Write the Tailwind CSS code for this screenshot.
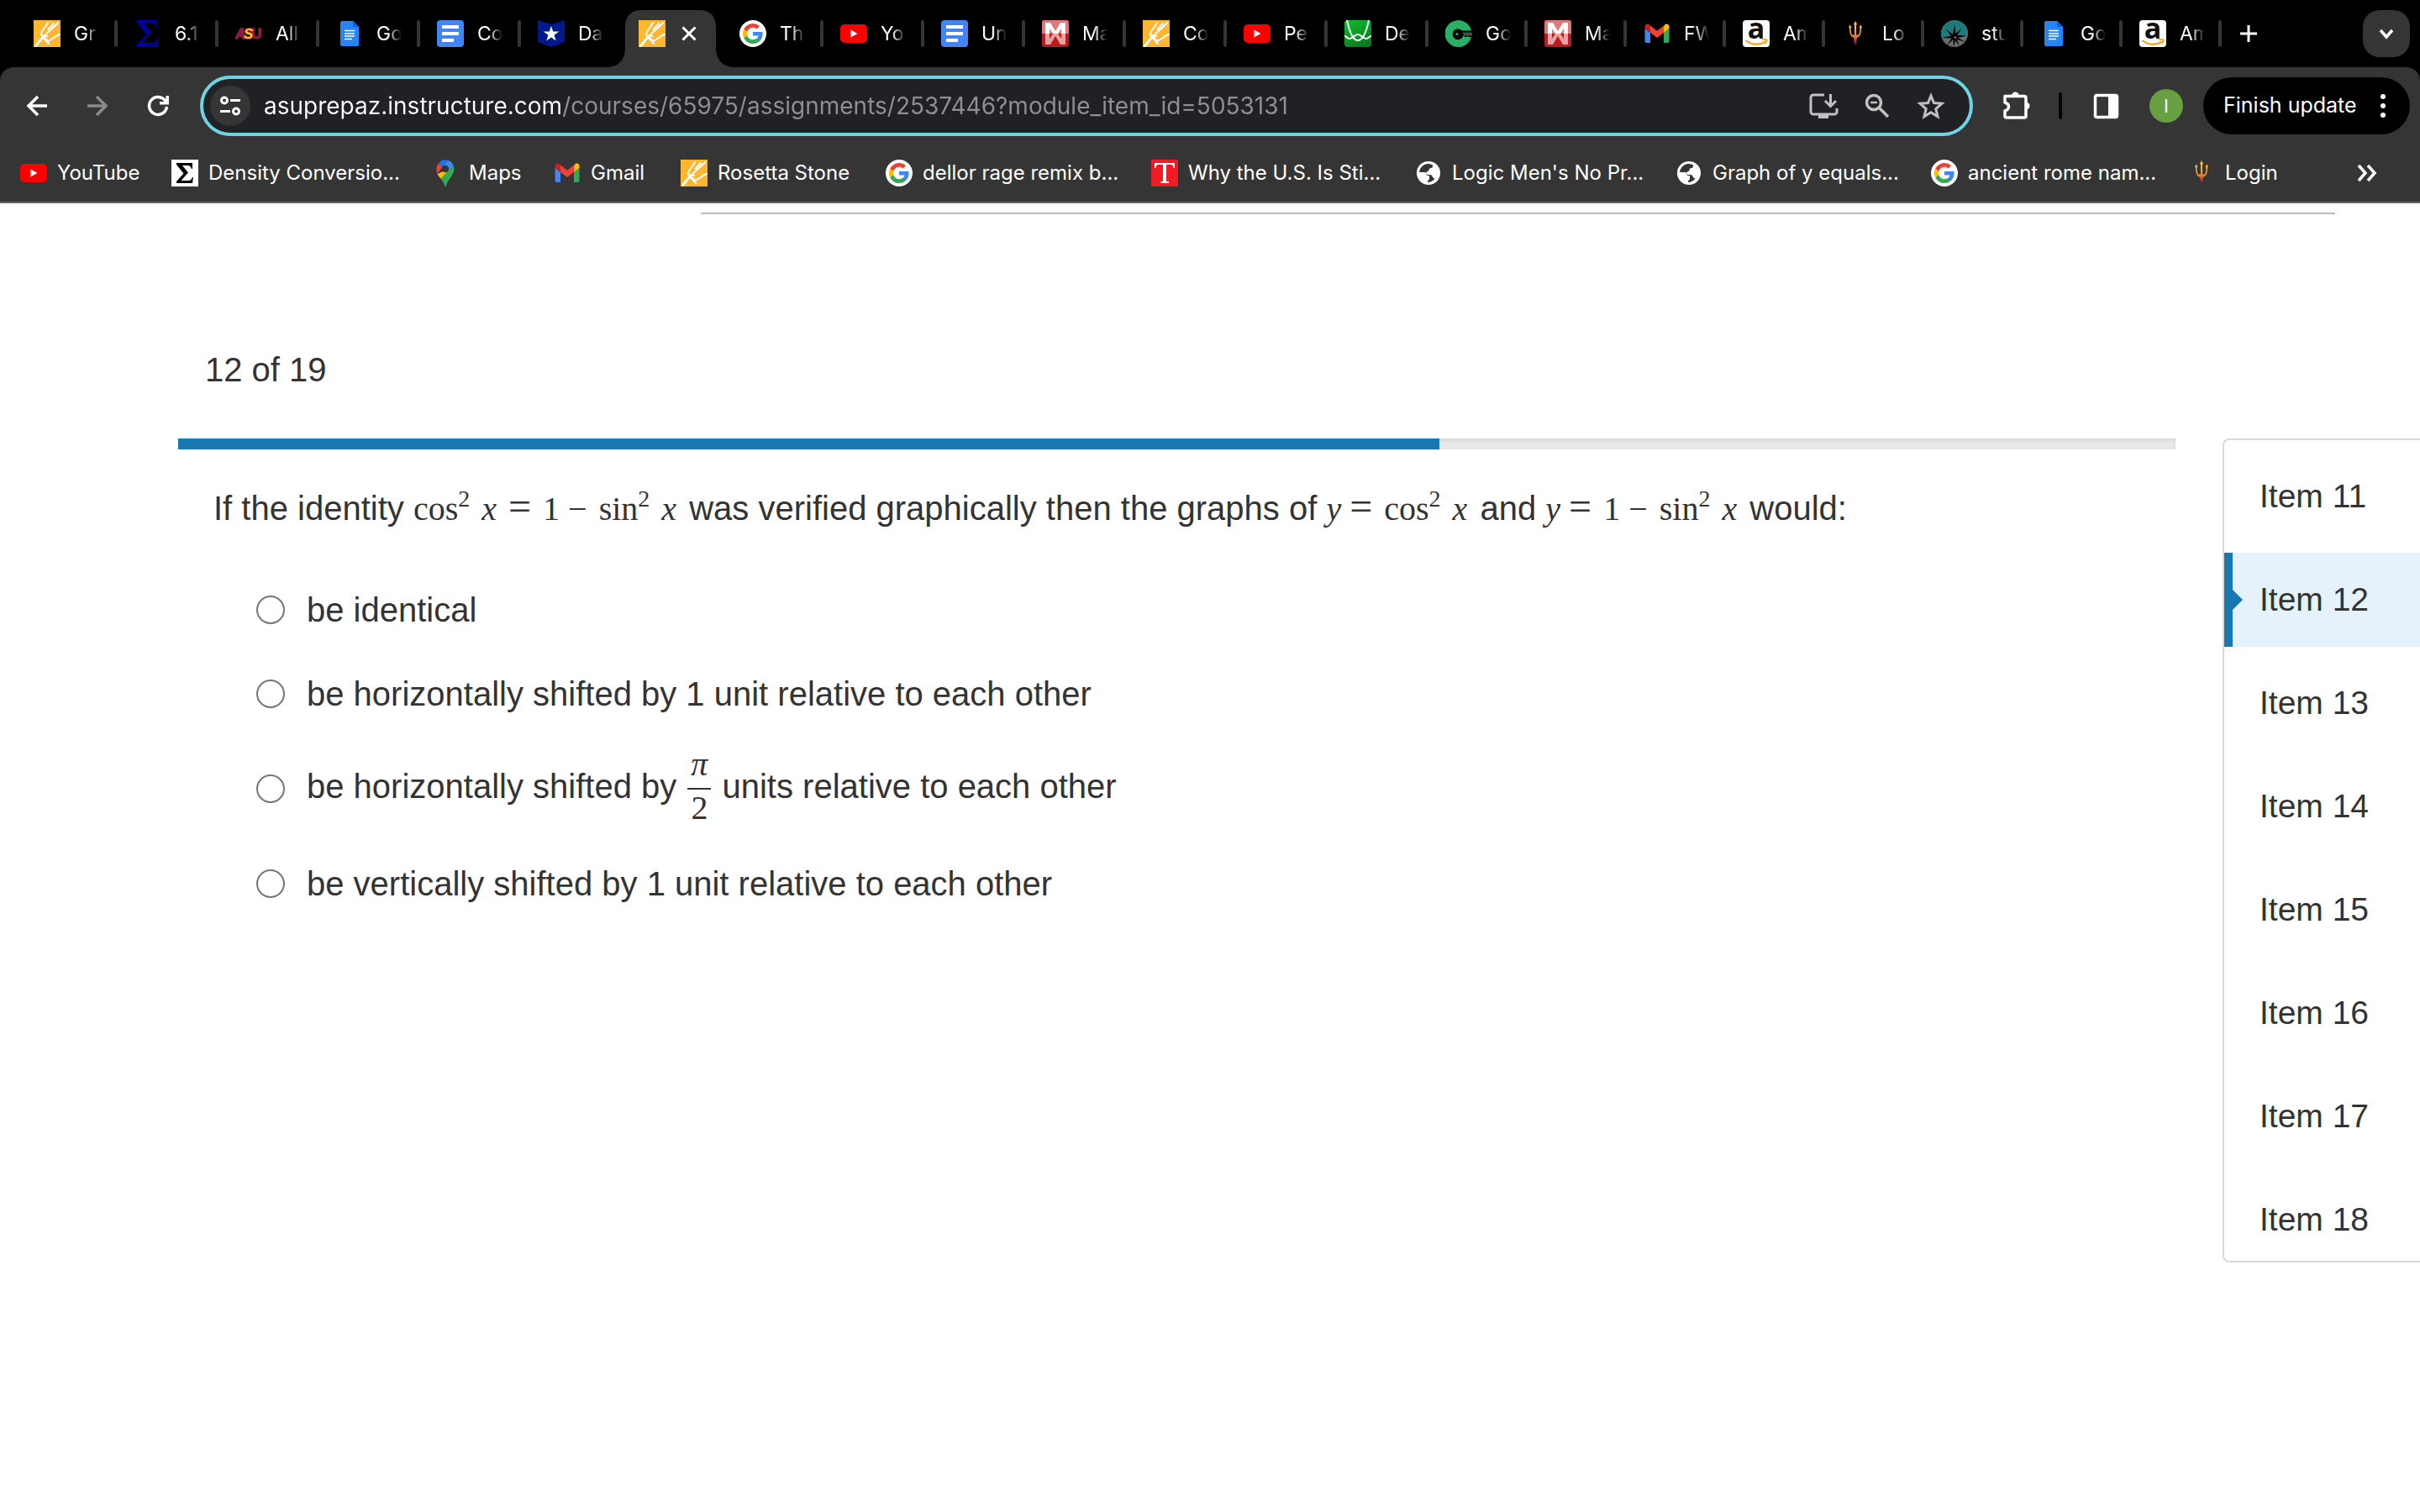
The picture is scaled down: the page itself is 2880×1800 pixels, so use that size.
<!DOCTYPE html>
<html lang="en">
<head>
  <meta charset="UTF-8">
  <meta name="viewport" content="width=device-width, initial-scale=1.0">
  <title>Assignment - Item 12</title>
  <script src="https://cdn.jsdelivr.net/npm/@tailwindcss/browser@4"></script>
</head>
<body class="bg-white text-[#333] font-['Liberation_Sans',Arial,sans-serif] min-h-screen overflow-x-hidden">

  <!-- Gradients must stay rendered, a hidden svg would drop them -->
  <svg class="absolute size-0" aria-hidden="true">
    <defs>
      <linearGradient id="gr-green" x1="0" y1="0" x2="0.6" y2="1"><stop offset="0" stop-color="#0cc22e"/><stop offset="1" stop-color="#077a20"/></linearGradient>
      <linearGradient id="gr-fork" x1="0" y1="0" x2="0" y2="1"><stop offset="0.3" stop-color="#ffb52e"/><stop offset="0.6" stop-color="#e8802c"/><stop offset="0.9" stop-color="#7a1038"/></linearGradient>
    </defs>
  </svg>

  <!-- Icon library -->
  <svg class="hidden" aria-hidden="true">
    <symbol id="i-prep" viewBox="0 0 32 32">
      <rect width="32" height="32" fill="#ffb732"/>
      <g fill="none" stroke="#fff" stroke-width="2" stroke-linecap="round">
        <path d="M2.500 30.500 11 20" stroke-width="2.800"/>
        <path d="M17 3C14 9 8 14 9 17.500c1.500 1.500 5 1 7 1.500"/>
        <path d="M29 3C24 9 17 13 12 20"/>
        <path d="M24 4 17.500 11"/>
        <path d="M31 17c-4 1-9 6-13 7.500-3 0-3-3-6-4"/>
        <path d="M11 20l7 8"/>
      </g>
    </symbol>
    <symbol id="i-sigma" viewBox="0 0 32 32">
      <path fill="#00009c" d="M2 0h24l1 9h-1c-1-4-3-5.500-7-5.500H11l9 11L9 27h11c4 0 6-2 7.500-6H29l-2 11H2v-1.500L14 17 2 1.500z"/>
    </symbol>
    <symbol id="i-sigma-box" viewBox="0 0 32 32">
      <rect width="32" height="32" fill="#fff"/>
      <path fill="#000" d="M6 4h19v7h-1c-1-3-2-4-5-4h-6l7 8.500L11.500 25H20c3 0 4-1.500 5-4h1l-1 7H6v-2l8.500-9.500L6 6z"/>
    </symbol>
    <symbol id="i-asu" viewBox="0 0 32 32">
      <g font-family="Liberation Sans" font-weight="700" font-size="17" fill="#8c1d40" stroke="#8c1d40" stroke-width="1.500">
        <text x="0" y="22" font-style="italic">A</text><text x="19" y="22">U</text>
        <text x="10" y="22" font-style="italic" fill="#ffc627" stroke-width="2" paint-order="stroke">S</text>
      </g>
    </symbol>
    <symbol id="i-gdoc" viewBox="0 0 32 32">
      <path fill="#2684fc" d="M7 1h13l7 7v21a2 2 0 0 1-2 2H7a2 2 0 0 1-2-2V3a2 2 0 0 1 2-2z"/>
      <path fill="#0066da" d="M20 1l7 7h-5a2 2 0 0 1-2-2z"/>
      <path stroke="#fff" stroke-width="1.500" d="M10 12.500h12M10 16h12M10 19h12M10 22.500h9"/>
    </symbol>
    <symbol id="i-doc" viewBox="0 0 32 32">
      <rect width="32" height="32" rx="4" fill="#4285f4"/>
      <path stroke="#fff" stroke-width="4" d="M6 8h20M6 16h20M6 24h14"/>
    </symbol>
    <symbol id="i-shield" viewBox="0 0 32 32">
      <path fill="#001a8c" d="M0 0l16 5L32 0v26l-16 6L0 26z"/>
      <path fill="#fff" d="m16 7 2.200 6.600h7L19.600 17.700 21.700 24.500 16 20.400 10.300 24.500l2.100-6.800L6.800 13.600h7z"/>
    </symbol>
    <symbol id="i-google" viewBox="0 0 32 32">
      <circle cx="16" cy="16" r="16" fill="#fff"/>
      <g transform="translate(4 4)">
        <path fill="#4285f4" d="M23.500 12.300c0-.8-.1-1.600-.2-2.300H12v4.500h6.500a5.500 5.500 0 0 1-2.400 3.600v3h3.900c2.200-2.100 3.500-5.200 3.500-8.800z"/>
        <path fill="#34a853" d="M12 24c3.200 0 6-1.100 8-2.900l-3.900-3c-1.100.7-2.500 1.200-4.100 1.200-3.100 0-5.800-2.100-6.700-5H1.300v3.100A12 12 0 0 0 12 24z"/>
        <path fill="#fbbc05" d="M5.300 14.300a7.200 7.200 0 0 1 0-4.600V6.600h-4a12 12 0 0 0 0 10.800z"/>
        <path fill="#ea4335" d="M12 4.800c1.800 0 3.300.6 4.600 1.800L20 3.200A12 12 0 0 0 1.300 6.600l4 3.100c.9-2.800 3.600-4.900 6.700-4.900z"/>
      </g>
    </symbol>
    <symbol id="i-yt" viewBox="0 0 32 32">
      <rect y="5" width="32" height="22" rx="5" fill="#f00"/>
      <path fill="#fff" d="M12.500 11.500v9l8-4.500z"/>
    </symbol>
    <symbol id="i-mirror" viewBox="0 0 32 32">
      <rect width="32" height="32" rx="3" fill="#b81c20"/>
      <path fill="#e0797b" d="M3 0h26a3 3 0 0 1 3 3v13H0V3a3 3 0 0 1 3-3z"/>
      <path fill="#fff" d="M4 16V3h6l6 10 6-10h6v13h-5V10l-4 6h-6l-4-6v6z"/>
      <path fill="#ec9fa0" d="M4 16v13h6l6-10 6 10h6V16h-5v6l-4-6h-6l-4 6v-6z"/>
    </symbol>
    <symbol id="i-desmos" viewBox="0 0 32 32">
      <rect width="32" height="32" rx="4" fill="url(#gr-green)"/>
      <path fill="none" stroke="#fff" stroke-width="2" d="M3 0c3 14 7 24 13 24S26 14 29 0"/>
      <path fill="none" stroke="#fff" stroke-width="2" d="M0 19c3 0 3 3 6 3 4 0 6-5 10-5s6 5 10 5c3 0 3-3 6-3"/>
    </symbol>
    <symbol id="i-key" viewBox="0 0 32 32">
      <path fill="#2bae66" d="M30.500 10.500A16 16 0 1 0 31 20h-3.500l-1-1.500-1 1.500H23l-1-2-2 3a6.500 6.500 0 1 1 0-8.500h11z"/>
      <path stroke="#2bae66" stroke-width="1" d="M21 15.500h11M22 17.500h10"/>
      <circle cx="14" cy="16.500" r="1.500" fill="#2bae66"/>
    </symbol>
    <symbol id="i-gmail" viewBox="0 0 32 32">
      <path fill="#4285f4" d="M3.500 27H8V15l-6.500-5v15a2 2 0 0 0 2 2z"/>
      <path fill="#34a853" d="M24 27h4.500a2 2 0 0 0 2-2V10L24 15z"/>
      <path fill="#fbbc04" d="M24 7.500V15l6.500-5V7.500c0-2.600-3-4-5-2.500z"/>
      <path fill="#ea4335" d="M8 15V6.500l8 6.200 8-6.200V15l-8 6z"/>
      <path fill="#c5221f" d="M1.500 7.500V10L8 15V6.500L6.500 5c-2-1.500-5-.1-5 2.500z"/>
    </symbol>
    <symbol id="i-amazon" viewBox="0 0 32 32">
      <rect width="32" height="32" rx="4" fill="#fff"/>
      <text x="16" y="22" text-anchor="middle" font-family="Open Sans" font-weight="700" font-size="34" fill="#111">a</text>
      <path fill="none" stroke="#f90" stroke-width="2" stroke-linecap="round" d="M4 24.500c7 5.500 16 5.500 23 1"/>
      <path fill="none" stroke="#f90" stroke-width="1.500" d="M23 23.500c3-1 5.500-.8 5.500 0s-.5 3-2 4.500"/>
    </symbol>
    <symbol id="i-fork" viewBox="0 0 32 32">
      <path fill="none" stroke="#8c1d40" stroke-width="3" d="M16 18v10"/>
      <path fill="url(#gr-fork)" d="M16 1l2 4-1 1v11.500h2.500c1.500-1 2-4 2-9L20 9l2.500-3.500L24 9l-1 .500c0 6-1 9-3 10.500l-2 1-2 10-2-10-2-1c-2-1.500-3-4.500-3-10.500L8 9l1.500-3.500L12 9l-1.500-.5c0 5 .5 8 2 9H15V6l-1-1z"/>
    </symbol>
    <symbol id="i-compass" viewBox="0 0 32 32">
      <circle cx="16" cy="16" r="16" fill="#6b6b6e"/>
      <path fill="#1f7a7c" d="M1 21.500A16 16 0 1 1 32 17l-15 3z"/>
      <path fill="#000" d="m16 5 1.500 11 7-6-5.500 8 12 .5L20 21l9 5-10-3 3 8-5-7-2 8-.5-9-7.500 7 5.500-8.500L1 21l11-2.500L5 10l9 7z"/>
      <circle cx="17" cy="20.500" r="1.500" fill="#6b6b6e"/>
    </symbol>
    <symbol id="i-maps" viewBox="0 0 32 32">
      <path fill="#34a853" d="M6.500 17c2 4.500 7 7 8.500 14 .3 1.300 1.700 1.300 2 0 1.500-7 8.500-11 9.500-19 0-1.500-.2-3-.7-4z"/>
      <path fill="#fbbc04" d="M12.600 14.500 6.700 17c.8 1.900 2 3.500 3.800 5.700L19 13.600z"/>
      <path fill="#ea4335" d="M7.800 4.600A11 11 0 0 0 6.500 16.500l6-7.500z"/>
      <path fill="#1a73e8" d="M7.800 4.600 12.700 9 19.500.8A11 11 0 0 0 7.800 4.600z"/>
      <path fill="#4285f4" d="M19.500.8 12.700 9l6.300 4.600 6.800-6A11 11 0 0 0 19.500.8z"/>
      <circle cx="16" cy="11" r="4.200" fill="#353535"/>
    </symbol>
    <symbol id="i-times" viewBox="0 0 32 32">
      <rect width="32" height="32" fill="#ee1c25"/>
      <path fill="#fff" d="M4 4h24v6h-1.500c0-3-1-4-4-4h-4.500V26h3v2H11v-2h3V6H9.500c-3 0-4 1-4 4H4z"/>
    </symbol>
    <symbol id="i-globe" viewBox="0 0 32 32">
      <circle cx="16" cy="16" r="14" fill="#fff"/>
      <path fill="#353535" d="M16 5a11 11 0 0 0-8.500 4A11 11 0 0 0 5 15h6c2 0 3 1 3 3v1h3v4c0 1.500-1.500 1-2 2.500-.2 1 .3 1.500 1 1.500 3-.2 6-2 7.500-4.500-1-.5-2-.5-2.500-1.500-.5-2.500-2-3-4.500-3h-3v-2.500c0-2 3-1 3-3 0-1.500 1-2.500 2.500-2.500 2 0 2-1.500 2-3.500A11 11 0 0 0 16 5z"/>
    </symbol>
  </svg>

  <header class="text-white font-[Inter,sans-serif] border-b-2 border-[#616161] bg-black">

    <!-- Tab strip -->
    <div class="flex items-center h-20 pl-5 pr-3">
      <div id="tabs" class="flex h-full"></div>
      <button aria-label="New tab" class="ml-[18px] size-7">
        <svg viewBox="0 0 28 28" class="size-7"><path d="M14 4v20M4 14h20" stroke="#fff" stroke-width="3"/></svg>
      </button>
      <button aria-label="Search tabs" class="ml-auto size-14 rounded-[20px] bg-[#353535] flex items-center justify-center">
        <svg viewBox="0 0 24 24" class="size-6"><path d="m5 8 7 8 7-8" fill="none" stroke="#fff" stroke-width="3.500"/></svg>
      </button>
    </div>

    <!-- Toolbar -->
    <div class="bg-[#353535] rounded-t-2xl">
      <div class="flex items-center h-[92px] pl-6 pr-3">
        <button aria-label="Back" class="size-10">
          <svg viewBox="0 0 40 40" class="size-10" fill="none" stroke="#fff" stroke-width="3.500"><path d="M32 20H10M21 9 10 20l11 11"/></svg>
        </button>
        <button aria-label="Forward" class="size-10 ml-8">
          <svg viewBox="0 0 40 40" class="size-10" fill="none" stroke="#8a8a8a" stroke-width="3.500"><path d="M8 20h22M19 9l11 11-11 11"/></svg>
        </button>
        <button aria-label="Reload" class="size-10 ml-8">
          <svg viewBox="0 0 40 40" class="size-10" fill="none" stroke="#fff" stroke-width="3.500"><path d="M30.500 21a10.500 10.500 0 1 1-3-8.500l2.500 3M31.200 8v8.700H22"/></svg>
        </button>

        <div class="flex flex-1 items-center h-[72px] ml-[30px] px-2 rounded-full border-4 border-[#70d3e2] bg-[#202125]">
          <button aria-label="View site information" class="size-12 shrink-0 rounded-full bg-[#353535] flex items-center justify-center">
            <svg viewBox="0 0 24 24" class="size-6" fill="none" stroke="#fff" stroke-width="3"><circle cx="5" cy="5.500" r="3.500"/><path d="M12 5.500h12M0 18.500h12"/><circle cx="19" cy="18.500" r="3.500"/></svg>
          </button>
          <input type="text" aria-label="Address" value="asuprepaz.instructure.com/courses/65975/assignments/2537446?module_item_id=5053131"
            class="flex-1 min-w-0 h-12 ml-4 text-[28px] text-transparent bg-clip-text bg-[linear-gradient(90deg,#fff_356px,#8f9094_356px)] outline-none">
          <div class="flex shrink-0 gap-7 mr-5">
            <button aria-label="Install app" class="size-9">
              <svg viewBox="0 0 36 36" class="size-9" fill="none" stroke="#c1c1c1" stroke-width="3"><path d="M19 5H6a3 3 0 0 0-3 3v17a3 3 0 0 0 3 3h25a3 3 0 0 0 3-3v-4"/><path d="M26.500 4v14M20 12l6.500 6.500L33 12"/><path d="M12 30.500h12" stroke-width="5"/></svg>
            </button>
            <button aria-label="Zoom" class="size-9">
              <svg viewBox="0 0 36 36" class="size-9" fill="none" stroke="#c1c1c1" stroke-width="3.500"><circle cx="14" cy="14" r="8.500"/><path d="M20 20l11 11"/><path d="M10 14h8" stroke-width="2.500"/></svg>
            </button>
            <button aria-label="Bookmark this tab" class="size-9">
              <svg viewBox="0 0 36 36" class="size-9" fill="none" stroke="#c1c1c1" stroke-width="3"><path d="m18 6 3.500 8.500 9.500.8-7.200 6.200 2.200 9.300-8-5-8 5 2.200-9.300L5 15.300l9.500-.8z"/></svg>
            </button>
          </div>
        </div>

        <button aria-label="Extensions" class="size-10 ml-8">
          <svg viewBox="0 0 40 40" class="size-10" fill="none" stroke="#fff" stroke-width="3.500" stroke-linejoin="round"><path d="M6 8.500h23a2 2 0 0 1 2 2V32a2 2 0 0 1-2 2H8a2 2 0 0 1-2-2v-6c6-2 6-8 0-10z"/><path fill="#fff" stroke="none" d="M14 8a4.500 4.500 0 0 1 9 0zM31 15.500a4.500 4.500 0 0 1 0 9z"/></svg>
        </button>
        <div class="w-1 h-8 ml-[30px] rounded-full bg-black"></div>
        <button aria-label="Side panel" class="size-8 ml-9">
          <svg viewBox="0 0 32 32" class="size-8"><rect x="3.500" y="3.500" width="26" height="26" rx="2" fill="none" stroke="#fff" stroke-width="3.500"/><path d="M19 3h10v27H19z" fill="#fff"/></svg>
        </button>
        <button aria-label="Profile" class="size-10 ml-9 rounded-full bg-[#689f41] text-[22px]">I</button>
        <button class="flex items-center h-[68px] ml-6 pl-6 pr-[26px] rounded-full bg-black text-[25px]">
          <span class="w-[184px] text-left whitespace-nowrap">Finish update</span>
          <svg viewBox="0 0 12 32" class="w-3 h-8" fill="#fff"><circle cx="6" cy="5" r="3"/><circle cx="6" cy="16" r="3"/><circle cx="6" cy="27" r="3"/></svg>
        </button>
      </div>

      <!-- Bookmarks bar -->
      <nav class="flex items-start h-[68px] pl-6 pt-[18px] text-2xl">
        <div id="bookmarks" class="flex"></div>
        <button aria-label="More bookmarks" class="size-8 ml-auto mr-[46px]">
          <svg viewBox="0 0 32 32" class="size-8" fill="none" stroke="#fff" stroke-width="3.500"><path d="m5 7 8 9-8 9M16 7l8 9-8 9"/></svg>
        </button>
      </nav>
    </div>
  </header>

  <main>
    <hr class="mt-[11px] ml-[834px] mr-[101px] border-t-2 border-[#bdbdbd]">
    <p class="mt-[157px] ml-[244px] text-[40px] leading-[56px]">12 of 19</p>

    <div class="flex items-start mt-[54px] pl-[212px]">
      <section class="flex-1 min-w-0">
        <div role="progressbar" aria-valuenow="12" aria-valuemin="0" aria-valuemax="19" class="h-[13px] bg-[#e8e8e8] shadow-[inset_0_2px_4px_#d4d4d4]">
          <div class="h-full bg-[#1a78b0]" style="width: 63.15%"></div>
        </div>

        <form class="pl-[42px]">
          <p id="question" class="mt-[42px] text-[40px] leading-[56px] whitespace-nowrap">If the identity <span class="font-['Liberation_Serif',serif]">cos<sup class="text-[28px] -top-4">2</sup> <i class="mx-1">x</i> <span class="text-[48px] leading-none mr-1">=</span> 1 <span class="mr-1">−</span> sin<sup class="text-[28px] -top-4">2</sup> <i class="mx-1">x</i></span> was verified graphically then the graphs of <span class="font-['Liberation_Serif',serif]"><i>y</i> <span class="text-[48px] leading-none mr-1">=</span> cos<sup class="text-[28px] -top-4">2</sup> <i class="mx-1">x</i></span> and <span class="font-['Liberation_Serif',serif]"><i>y</i> <span class="text-[48px] leading-none mr-1">=</span> 1 <span class="mr-1">−</span> sin<sup class="text-[28px] -top-4">2</sup> <i class="mx-1">x</i></span> would:</p>

          <div role="radiogroup" aria-labelledby="question" class="flex flex-col items-start gap-11 mt-16 pl-[51px] text-[40px] leading-[56px]">
            <label class="flex items-center gap-[26px]">
              <input type="radio" name="answer" class="appearance-none size-[34px] rounded-full border-2 border-[#767676] bg-white checked:border-[10px]">
              <span>be identical</span>
            </label>
            <label class="flex items-center gap-[26px]">
              <input type="radio" name="answer" class="appearance-none size-[34px] rounded-full border-2 border-[#767676] bg-white checked:border-[10px]">
              <span>be horizontally shifted by 1 unit relative to each other</span>
            </label>
            <label class="flex items-center gap-[26px]">
              <input type="radio" name="answer" class="appearance-none size-[34px] rounded-full border-2 border-[#767676] bg-white checked:border-[10px]">
              <span>be horizontally shifted by
                <span class="inline-flex flex-col align-middle items-center w-7 mx-0.5 font-['Liberation_Serif',serif]">
                  <i class="leading-6 pb-4">π</i>
                  <span class="w-full text-center border-t-2 border-[#333] pt-1 leading-9">2</span>
                </span>
                units relative to each other</span>
            </label>
            <label class="flex items-center gap-[26px]">
              <input type="radio" name="answer" class="appearance-none size-[34px] rounded-full border-2 border-[#767676] bg-white checked:border-[10px]">
              <span>be vertically shifted by 1 unit relative to each other</span>
            </label>
          </div>
        </form>
      </section>

      <!-- Item list -->
      <aside class="shrink-0 w-[235px] ml-14 max-h-[981px] overflow-hidden border-2 border-r-0 border-[#d9d9d9] rounded-l-lg">
        <ul id="items" class="flex flex-col gap-[11px] pt-[11px] text-[39px]"></ul>
      </aside>
    </div>
  </main>

  <script>
    const tabs = [
      ["i-prep", "Gr"], ["i-sigma", "6.1"], ["i-asu", "All"], ["i-gdoc", "Go"], ["i-doc", "Co"], ["i-shield", "Da"],
      ["i-prep", ""], ["i-google", "Th"], ["i-yt", "Yo"], ["i-doc", "Un"], ["i-mirror", "Ma"], ["i-prep", "Co"],
      ["i-yt", "Pe"], ["i-desmos", "De"], ["i-key", "Go"], ["i-mirror", "Ma"], ["i-gmail", "FW"], ["i-amazon", "Am"],
      ["i-fork", "Lo"], ["i-compass", "stu"], ["i-gdoc", "Go"], ["i-amazon", "Am"]
    ];
    const active = 6;

    document.getElementById("tabs").innerHTML = tabs.map(([icon, label], i) => {
      const width = i < 14 ? "w-[120px]" : "w-[118px]";
      if (i === active) {
        return `<div class="relative flex items-center pl-5 ${width}">
          <svg viewBox="0 0 156 68" class="absolute -left-5 bottom-0 w-[156px] h-[68px]"><path fill="#353535" d="M0 68c16 0 24-8 24-24V20C24 7 31 0 44 0h68c13 0 20 7 20 20v24c0 16 8 24 24 24z"/></svg>
          <svg class="relative size-8"><use href="#${icon}"/></svg>
          <button aria-label="Close tab" class="relative size-6 ml-4">
            <svg viewBox="0 0 24 24" class="size-6"><path d="m4.500 4.500 15 15m0-15-15 15" stroke="#fff" stroke-width="3"/></svg>
          </button>
        </div>`;
      }
      const sep = i === active - 1 ? "" : `<span class="w-1 h-8 ml-auto rounded-full bg-[#353535]"></span>`;
      return `<div class="flex items-center pl-5 ${width}">
        <svg class="size-8 shrink-0"><use href="#${icon}"/></svg>
        <span class="w-[30px] ml-4 overflow-hidden whitespace-nowrap text-[23px] [mask-image:linear-gradient(90deg,#000_45%,transparent)]">${label}</span>${sep}
      </div>`;
    }).join("");

    const bookmarks = [
      ["i-yt", "YouTube", "w-[180px]"],
      ["i-sigma-box", "Density Conversio...", "w-[310px]"],
      ["i-maps", "Maps", "w-[145px]"],
      ["i-gmail", "Gmail", "w-[151px]"],
      ["i-prep", "Rosetta Stone", "w-[244px]"],
      ["i-google", "dellor rage remix b...", "w-[316px]"],
      ["i-times", "Why the U.S. Is Sti...", "w-[314px]"],
      ["i-globe", "Logic Men's No Pr...", "w-[310px]"],
      ["i-globe", "Graph of y equals...", "w-[304px]"],
      ["i-google", "ancient rome nam...", "w-[306px]"],
      ["i-fork", "Login", "w-[140px]"]
    ];

    document.getElementById("bookmarks").innerHTML = bookmarks.map(([icon, label, width]) =>
      `<a href="#" class="flex items-center gap-3 h-8 whitespace-nowrap ${width}"><svg class="size-8 shrink-0"><use href="#${icon}"/></svg>${label}</a>`
    ).join("");

    document.getElementById("items").innerHTML = [11, 12, 13, 14, 15, 16, 17, 18].map(n => n === 12
      ? `<li><a href="#" aria-current="true" class="relative flex items-center h-28 pl-8 border-l-[10px] border-[#1a78b0] bg-[#e5f2fb]">
          <svg viewBox="0 0 12 24" class="absolute left-0 w-3 h-6"><path fill="#1a78b0" d="M0 0l12 12L0 24z"/></svg>Item ${n}</a></li>`
      : `<li><a href="#" class="flex items-center h-28 pl-[42px]">Item ${n}</a></li>`
    ).join("");
  </script>
</body>
</html>
